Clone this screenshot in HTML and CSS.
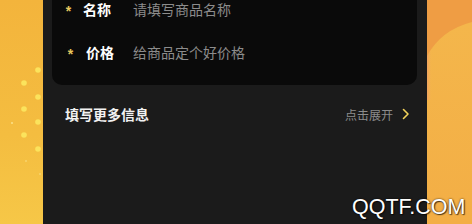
FILE: index.html
```html
<!DOCTYPE html>
<html lang="zh">
<head>
<meta charset="utf-8">
<link rel="stylesheet" href="styles.css">
</head>
<body>
<div class="page">
  <div class="side-left">
    <svg class="dots" width="43" height="224" viewBox="0 0 43 224">
      <circle cx="38" cy="70" r="2.8" fill="#fbe35c"/>
      <circle cx="24" cy="83" r="2.8" fill="#fbe35c"/>
      <circle cx="38" cy="97" r="2.8" fill="#fbe35c"/>
      <circle cx="24" cy="109" r="2.8" fill="#fbe35c"/>
      <circle cx="38" cy="122" r="2.8" fill="#fbe35c"/>
      <circle cx="24" cy="135" r="2.8" fill="#fbe35c"/>
      <circle cx="38" cy="149" r="2.8" fill="#fbe35c"/>
      <circle cx="12" cy="123" r="1" fill="#fbe28a"/>
      <circle cx="26" cy="161" r="0.8" fill="#fbe28a"/>
      <circle cx="40" cy="174" r="0.8" fill="#fbe28a"/>
    </svg>
  </div>
  <main class="panel">
    <section class="card">
      <div class="field">
        <span class="star">*</span>
        <span class="label">名称</span>
        <span class="placeholder">请填写商品名称</span>
      </div>
      <div class="field field-shift">
        <span class="star">*</span>
        <span class="label">价格</span>
        <span class="placeholder">给商品定个好价格</span>
      </div>
    </section>
    <div class="more">
      <span class="more-title">填写更多信息</span>
      <span class="more-action">点击展开
        <svg class="chev" width="8" height="12" viewBox="0 0 8 12"><path d="M1.5 1.5 L6 6 L1.5 10.5" fill="none" stroke="#f2d25a" stroke-width="1.6" stroke-linecap="round" stroke-linejoin="round"/></svg>
      </span>
    </div>
  </main>
  <div class="side-right">
    <svg width="45" height="224" viewBox="0 0 45 224">
      <defs>
        <linearGradient id="lo" x1="0" y1="0" x2="0" y2="1">
          <stop offset="0" stop-color="#f4b74c"/>
          <stop offset="1" stop-color="#f3ae45"/>
        </linearGradient>
        <linearGradient id="pk" x1="0" y1="0" x2="1" y2="0">
          <stop offset="0" stop-color="#ee9a6a" stop-opacity="0.7"/>
          <stop offset="1" stop-color="#f4b74c" stop-opacity="0"/>
        </linearGradient>
      </defs>
      <rect width="45" height="224" fill="url(#lo)"/>
      <rect x="0" y="50" width="5" height="50" fill="url(#pk)"/>
      <path d="M0 0 H45 V22 Q14 30 0 56 Z" fill="#ef9d44"/>
    </svg>
  </div>
  <div class="watermark">QQTF.COM</div>
</div>
</body>
</html>
```

FILE: styles.css
```css
html, body {
  margin: 0;
  padding: 0;
  width: 472px;
  height: 224px;
  overflow: hidden;
  background: #1b1b1b;
}
.page {
  position: relative;
  display: flex;
  width: 472px;
  height: 224px;
  font-family: "Noto Sans CJK SC", "Noto Sans", sans-serif;
}
.side-left {
  width: 43px;
  flex: none;
  background: linear-gradient(180deg, #f3b43c 0%, #f4bd40 60%, #f6c747 100%);
}
.dots { display: block; }
.side-right {
  width: 45px;
  flex: none;
}
.side-right svg { display: block; }
.panel {
  width: 384px;
  flex: none;
  background: #1b1b1b;
  display: flex;
  flex-direction: column;
}
.card {
  margin: -13px 10px 0 9px;
  height: 98px;
  box-sizing: border-box;
  background: #0a0a0a;
  border-radius: 0 0 10px 10px;
  display: flex;
  flex-direction: column;
  padding-left: 8px;
}
.field {
  height: 43px;
  display: flex;
  align-items: center;
}
.star {
  width: 17px;
  color: #e7c85e;
  font-family: "Liberation Sans", sans-serif;
  font-size: 14px;
  font-weight: bold;
  padding-top: 4px;
  text-align: center;
}
.label {
  color: #ffffff;
  font-size: 14px;
  font-weight: bold;
  width: 50px;
  margin-left: 6px;
}
.field-shift .star { margin-left: 2px; }
.field-shift .label { width: 47px; margin-left: 7px; }
.placeholder {
  color: #8c8c8c;
  font-size: 14px;
}
.more {
  margin-top: 10px;
  height: 38px;
  display: flex;
  align-items: center;
  justify-content: space-between;
  padding: 0 17px 0 22px;
}
.more-title {
  color: #f2f2f2;
  font-size: 14px;
  font-weight: bold;
}
.more-action {
  display: flex;
  align-items: center;
  gap: 9px;
  color: #8c8c8c;
  font-size: 12px;
}
.chev { display: block; }
.watermark {
  position: absolute;
  left: 352px;
  top: 195px;
  font-family: "Liberation Sans", Arial, sans-serif;
  font-size: 21.5px;
  line-height: 24px;
  color: #ffffff;
  text-shadow: 0 0 2px rgba(0,0,0,0.8), 1px 1px 1px rgba(0,0,0,0.6);
}
```
